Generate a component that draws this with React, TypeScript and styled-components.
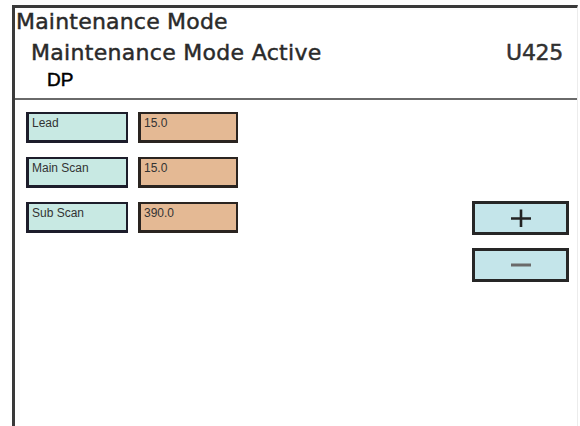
import React from "react";
import styled, { createGlobalStyle } from "styled-components";

const Global = createGlobalStyle`
  html, body { margin: 0; padding: 0; background: #ffffff; }
  body { width: 580px; height: 426px; overflow: hidden; }
`;

const Frame = styled.div`
  margin: 5px 0 0 12px;
  width: 566px;
  height: 424px;
  border-top: 3px solid #3a3a3a;
  border-left: 3px solid #3a3a3a;
  border-right: 1px solid #ececec;
  display: flex;
  flex-direction: column;
  box-sizing: border-box;
`;

const Header = styled.div`
  height: 89px;
  border-bottom: 2px solid #6a6a6a;
  display: flex;
  flex-direction: column;
  padding: 1px 14px 0 1px;
  font-family: "DejaVu Sans", sans-serif;
  color: #2a2a2a;
  -webkit-text-stroke: 0.45px #2a2a2a;
`;

const Title = styled.div`
  font-size: 22px;
  line-height: 26px;
  letter-spacing: 0.2px;
`;

const StatusRow = styled.div`
  margin-top: 5px;
  padding-left: 15px;
  display: flex;
  justify-content: space-between;
  font-size: 22px;
  line-height: 26px;
  letter-spacing: 0.3px;
`;

const Code = styled.span`
  font-size: 22px;
  letter-spacing: -0.3px;
  color: #333;
`;

const Section = styled.div`
  margin-top: 3px;
  padding-left: 31px;
  font-family: "Liberation Sans", Arial, sans-serif;
  font-size: 19px;
  line-height: 22px;
  color: #000;
  -webkit-text-stroke: 0.5px #000;
`;

const Body = styled.div`
  flex: 1;
  display: flex;
  justify-content: space-between;
  padding: 12px 8px 0 11px;
`;

const Fields = styled.div`
  display: flex;
  flex-direction: column;
  gap: 14px;
`;

const Row = styled.div`
  display: flex;
  gap: 10px;
`;

const Cell = styled.div<{ $kind: "label" | "value" }>`
  box-sizing: border-box;
  width: ${(p) => (p.$kind === "label" ? "102px" : "100px")};
  height: 31px;
  background: ${(p) => (p.$kind === "label" ? "#c8e9e3" : "#e4b994")};
  border: 2px solid ${(p) => (p.$kind === "label" ? "#1d1d2b" : "#2a2420")};
  border-left-width: 3px;
  border-bottom-width: 3px;
  padding: 2px 0 0 3px;
  font-family: "Liberation Sans", Arial, sans-serif;
  font-size: 12px;
  line-height: 14px;
  color: #333;
`;

const Buttons = styled.div`
  margin-top: 89px;
  display: flex;
  flex-direction: column;
  gap: 13px;
`;

const StepButton = styled.div`
  box-sizing: border-box;
  width: 97px;
  height: 34px;
  background: #c4e5ea;
  border: 3px solid #262626;
  display: flex;
  align-items: center;
  justify-content: center;
`;

const fields = [
  { label: "Lead", value: "15.0" },
  { label: "Main Scan", value: "15.0" },
  { label: "Sub Scan", value: "390.0" },
];

export default function App() {
  return (
    <>
      <Global />
      <Frame>
        <Header>
          <Title>Maintenance Mode</Title>
          <StatusRow>
            <span>Maintenance Mode Active</span>
            <Code>U425</Code>
          </StatusRow>
          <Section>DP</Section>
        </Header>
        <Body>
          <Fields>
            {fields.map((f) => (
              <Row key={f.label}>
                <Cell $kind="label">{f.label}</Cell>
                <Cell $kind="value">{f.value}</Cell>
              </Row>
            ))}
          </Fields>
          <Buttons>
            <StepButton>
              <svg width="22" height="20" viewBox="0 0 22 20">
                <path d="M1 10.5H21M11 1.5V19" stroke="#222" strokeWidth="2.6" fill="none" />
              </svg>
            </StepButton>
            <StepButton>
              <svg width="22" height="6" viewBox="0 0 22 6">
                <path d="M1 3H21" stroke="#6a6a6a" strokeWidth="3" fill="none" />
              </svg>
            </StepButton>
          </Buttons>
        </Body>
      </Frame>
    </>
  );
}
